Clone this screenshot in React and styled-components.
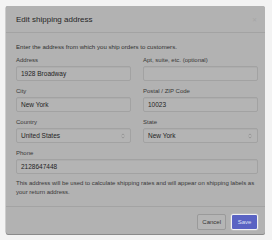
import React from 'react'
import styled, { createGlobalStyle } from 'styled-components'

const GlobalStyle = createGlobalStyle`
  html, body {
    margin: 0;
    padding: 0;
    background: #f3f3f3;
    font-family: "Liberation Sans", Arial, sans-serif;
  }
`

const Page = styled.div`
  width: 272px;
  height: 240px;
  padding: 6px 0 0 6px;
  box-sizing: border-box;
`

const Modal = styled.div`
  width: 259px;
  height: 228px;
  background: #b2b2b2;
  border-radius: 2px;
  box-shadow: 0 1px 0 #8a8a8a, -0.5px 0 0 #a6a6a6;
  display: flex;
  flex-direction: column;
  color: #2e2e2e;
`

const Header = styled.div`
  height: 27px;
  box-sizing: border-box;
  border-bottom: 1px solid #a3a3a3;
  display: flex;
  align-items: center;
  justify-content: space-between;
  padding: 1px 8px 0 10px;
`

const Title = styled.h2`
  margin: 0;
  font-size: 8px;
  font-weight: 400;
  color: #262626;
`

const Close = styled.span`
  font-size: 6px;
  color: #a6a6a6;
  line-height: 1;
`

const Body = styled.div`
  flex: 1;
  padding: 9px 7px 0 10px;
`

const Intro = styled.p`
  margin: 0 0 4px;
  font-size: 6.1px;
  line-height: 9px;
  color: #303030;
`

const Grid = styled.div`
  display: grid;
  grid-template-columns: 1fr 1fr;
  column-gap: 12px;
  row-gap: 5px;
`

const Field = styled.label`
  display: flex;
  flex-direction: column;
  gap: 1px;
  grid-column: ${p => (p.$wide ? '1 / span 2' : 'auto')};
`

const Label = styled.span`
  font-size: 6px;
  line-height: 10px;
  color: #383838;
`

const Box = styled.div`
  height: 15px;
  box-sizing: border-box;
  border: 1px solid #a2a2a2;
  border-radius: 2px;
  background: #b4b4b4;
  box-shadow: inset 0 1px 0 #adadad;
  display: flex;
  align-items: center;
  justify-content: space-between;
  padding: 0 5px 0 4px;
  font-size: 6.5px;
  color: #1f1f1f;
`

const Arrows = styled.svg`
  width: 4px;
  height: 6px;
`

const Help = styled.p`
  margin: 5px 0 0;
  font-size: 6px;
  line-height: 8.5px;
  color: #383838;
`

const Footer = styled.div`
  border-top: 1px solid #a3a3a3;
  height: 28px;
  box-sizing: border-box;
  display: flex;
  justify-content: flex-end;
  align-items: flex-start;
  gap: 5px;
  padding: 7px 7px 0 0;
`

const Button = styled.button`
  height: 16px;
  min-width: 27px;
  box-sizing: border-box;
  padding: 0 4px;
  border-radius: 2px;
  font-family: inherit;
  font-size: 6px;
  border: 1px solid ${p => (p.$primary ? '#f2f2f2' : '#9a9a9a')};
  background: ${p => (p.$primary ? '#5a63c3' : '#b5b5b5')};
  color: ${p => (p.$primary ? '#dfe2f5' : '#333')};
  box-shadow: ${p => (p.$primary ? '0 0 0 0.5px #c8c8c8' : 'none')};
`

function Select({ value }) {
  return (
    <Box>
      {value}
      <Arrows viewBox="0 0 4 6">
        <path d="M0.6 2.3 L2 0.9 L3.4 2.3 M0.6 3.7 L2 5.1 L3.4 3.7" fill="none" stroke="#8a8a8a" strokeWidth="0.7" />
      </Arrows>
    </Box>
  )
}

export default function App() {
  return (
    <Page>
      <GlobalStyle />
      <Modal>
        <Header>
          <Title>Edit shipping address</Title>
          <Close>✕</Close>
        </Header>
        <Body>
          <Intro>Enter the address from which you ship orders to customers.</Intro>
          <Grid>
            <Field>
              <Label>Address</Label>
              <Box>1928 Broadway</Box>
            </Field>
            <Field>
              <Label>Apt, suite, etc. (optional)</Label>
              <Box />
            </Field>
            <Field>
              <Label>City</Label>
              <Box>New York</Box>
            </Field>
            <Field>
              <Label>Postal / ZIP Code</Label>
              <Box>10023</Box>
            </Field>
            <Field>
              <Label>Country</Label>
              <Select value="United States" />
            </Field>
            <Field>
              <Label>State</Label>
              <Select value="New York" />
            </Field>
            <Field $wide>
              <Label>Phone</Label>
              <Box>2128647448</Box>
            </Field>
          </Grid>
          <Help>
            This address will be used to calculate shipping rates and will appear on shipping labels as
            your return address.
          </Help>
        </Body>
        <Footer>
          <Button>Cancel</Button>
          <Button $primary>Save</Button>
        </Footer>
      </Modal>
    </Page>
  )
}
